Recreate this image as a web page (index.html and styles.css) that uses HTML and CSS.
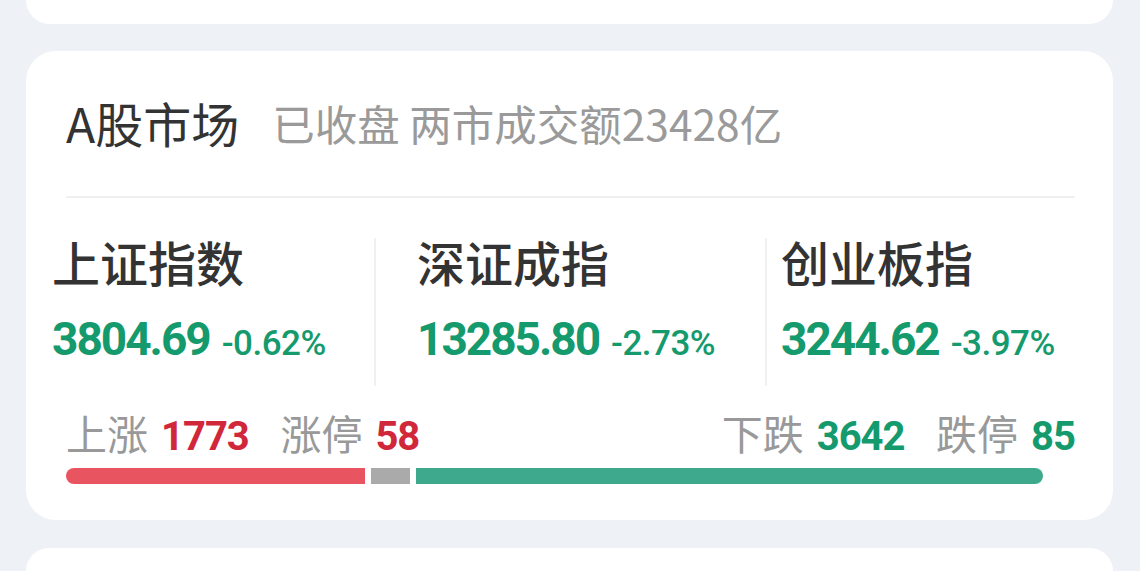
FILE: index.html
```
<!DOCTYPE html>
<html lang="zh-CN">

<head>
    <meta charset="UTF-8">
    <meta name="viewport" content="width=device-width, initial-scale=1.0">
    <title>A股市场</title>
    <link rel="stylesheet" href="styles.css">
</head>

<body>

    <div class="page">
        <div class="card card-top"></div>

        <div class="card market">
            <div class="market-head">
                <span class="market-title">A股市场</span>
                <span class="market-sub">已收盘 两市成交额23428亿</span>
            </div>

            <div class="index-row">
                <div class="index-col">
                    <div class="index-name">上证指数</div>
                    <div class="index-value">
                        <span class="price">3804.69</span>
                        <span class="pct">-0.62%</span>
                    </div>
                </div>
                <div class="index-col">
                    <div class="index-name">深证成指</div>
                    <div class="index-value">
                        <span class="price">13285.80</span>
                        <span class="pct">-2.73%</span>
                    </div>
                </div>
                <div class="index-col">
                    <div class="index-name">创业板指</div>
                    <div class="index-value">
                        <span class="price">3244.62</span>
                        <span class="pct">-3.97%</span>
                    </div>
                </div>
            </div>

            <div class="stats">
                <div class="stats-group">
                    <span class="label">上涨</span><span class="num up">1773</span>
                    <span class="label gap">涨停</span><span class="num up">58</span>
                </div>
                <div class="stats-group">
                    <span class="label">下跌</span><span class="num down">3642</span>
                    <span class="label gap">跌停</span><span class="num down">85</span>
                </div>
            </div>

            <div class="ratio-bar">
                <div class="seg seg-up" style="flex: 299"></div>
                <div class="seg seg-flat" style="flex: 39"></div>
                <div class="seg seg-down" style="flex: 627"></div>
            </div>
        </div>

        <div class="card card-bottom"></div>
    </div>

</body>

</html>
```

FILE: styles.css
```
body {
    margin: 0;
    padding: 0;
    background-color: #eef1f6;
    font-family: "Noto Sans CJK SC", sans-serif;
    overflow: hidden;
}

.page {
    display: flex;
    flex-direction: column;
    gap: 27px;
    padding: 0 27px 0 26px;
}

.card {
    background-color: #fff;
    border-radius: 30px;
}

.card-top {
    height: 24px;
    border-radius: 0 0 30px 30px;
}

.card-bottom {
    height: 23px;
    margin-top: 1px;
    border-radius: 30px 30px 0 0;
}

.market {
    height: 469px;
    box-sizing: border-box;
    padding: 41px 38px 0 40px;
}

.market-head {
    display: flex;
    align-items: center;
    gap: 33px;
    height: 60px;
    padding-bottom: 44px;
    border-bottom: 2px solid #f0f0f0;
}

.market-title {
    font-size: 48px;
    color: #333;
}

.market-sub {
    font-size: 42.5px;
    color: #9a9a9a;
}

.index-row {
    display: flex;
    margin: 40px 0 0 -14px;
    height: 148px;
}

.index-col {
    box-sizing: border-box;
}

.index-col:nth-child(1) {
    width: 322px;
}

.index-col:nth-child(2) {
    width: 391px;
    padding-left: 41px;
    border-left: 2px solid #f0f0f0;
}

.index-col:nth-child(3) {
    flex: 1;
    padding-left: 14px;
    border-left: 2px solid #f0f0f0;
}

.index-name {
    font-size: 48px;
    font-weight: 500;
    line-height: 56px;
    height: 56px;
    margin-top: -5px;
    color: #333;
}

.index-value {
    margin-top: 28px;
    height: 44px;
    line-height: 44px;
    color: #149a6c;
    font-family: Roboto, sans-serif;
    white-space: nowrap;
}

.price {
    font-size: 46px;
    font-weight: 700;
    letter-spacing: -2px;
}

.pct {
    font-size: 35px;
    font-weight: 500;
    letter-spacing: -0.5px;
    margin-left: 8px;
}

.stats {
    display: flex;
    justify-content: space-between;
    height: 48px;
    margin-top: 22px;
    line-height: 48px;
}

.stats-group {
    white-space: nowrap;
}

.label {
    font-size: 41px;
    color: #999;
}

.label.gap {
    margin-left: 28px;
}

.num {
    font-family: Roboto, sans-serif;
    font-size: 40px;
    font-weight: 700;
    letter-spacing: -1px;
    margin-left: 13px;
}

.num.up {
    color: #d0273a;
}

.num.down {
    color: #149a6c;
}

.ratio-bar {
    display: flex;
    gap: 6px;
    width: 977px;
    height: 16px;
    margin-top: 12px;
}

.seg-up {
    background-color: #e8545f;
    border-radius: 8px 0 0 8px;
}

.seg-flat {
    background-color: #aaaaaa;
}

.seg-down {
    background-color: #3fa98e;
    border-radius: 0 8px 8px 0;
}
```
